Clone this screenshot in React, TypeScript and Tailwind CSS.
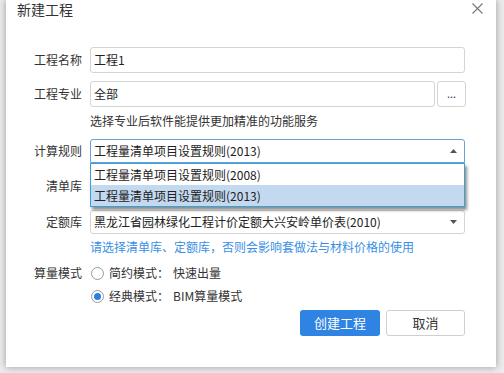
const FONT = "font-['Noto_Sans_CJK_SC','Microsoft_YaHei',sans-serif]";

function Label({ children }: { children: React.ReactNode }) {
  return <div className="w-[77px] shrink-0 pr-[1px] text-right text-[12px] text-[#333]">{children}</div>;
}

function Arrow({ up }: { up?: boolean }) {
  return (
    <svg width="7" height="4" viewBox="0 0 7 4" className="absolute right-[7px] top-1/2 -translate-y-1/2">
      <path d={up ? "M0 4 L3.5 0 L7 4 Z" : "M0 0 L3.5 4 L7 0 Z"} fill="#555" />
    </svg>
  );
}

function Radio({ checked, title, desc }: { checked?: boolean; title: string; desc: string }) {
  return (
    <div className="flex h-[20px] items-center text-[12px] text-[#333]">
      <span className="ml-[1px] flex h-[13px] w-[13px] items-center justify-center rounded-full border border-[#9a9a9a] bg-white">
        {checked && <span className="h-[7px] w-[7px] rounded-full bg-[#2b7fe0]" />}
      </span>
      <span className="ml-[5px]">{title}</span>
      <span className="ml-[4px]">{desc}</span>
    </div>
  );
}

export default function App() {
  return (
    <div className={`h-[373px] w-[504px] overflow-hidden bg-[#ebebeb] pl-[6px] ${FONT}`}>
      <div className="relative h-[367px] w-[490px] bg-white shadow-[0_0_7px_rgba(0,0,0,0.35)]">
        <div className="h-[18px] pl-[11px] text-[14px] leading-[18px] text-[#333]">新建工程</div>
        <svg width="11" height="11" viewBox="0 0 11 11" className="absolute right-[13px] top-[3px]">
          <path d="M0.5 0.5 L10.5 10.5 M10.5 0.5 L0.5 10.5" stroke="#777" strokeWidth="1.1" />
        </svg>

        <div className="mt-[29px] flex h-[26px] items-center gap-[7px]">
          <Label>工程名称</Label>
          <div className="flex h-[26px] w-[375px] items-center rounded-[3px] border border-[#d4d4d4] pl-[3px] text-[12px] text-[#222]">
            工程1
          </div>
        </div>

        <div className="mt-[8px] flex h-[26px] items-center gap-[7px]">
          <Label>工程专业</Label>
          <div className="flex h-[26px] w-[345px] items-center rounded-[3px] border border-[#d4d4d4] pl-[3px] text-[12px] text-[#222]">
            全部
          </div>
          <div className="-ml-[5px] flex h-[26px] w-[29px] items-center justify-center rounded-[3px] border border-[#d4d4d4] pb-[2px] text-[11px] text-[#335]">
            ...
          </div>
        </div>

        <div className="mt-[6px] pl-[84px] text-[12px] leading-[16px] text-[#333]">选择专业后软件能提供更加精准的功能服务</div>

        <div className="mt-[10px] flex h-[24px] items-center gap-[7px]">
          <Label>计算规则</Label>
          <div className="relative w-[375px]">
            <div className="relative flex h-[24px] items-center rounded-t-[3px] border border-[#6a9fdc] pl-[3px] text-[12px] text-[#222]">
              工程量清单项目设置规则(2013)
              <Arrow up />
            </div>
            <div className="absolute left-0 top-[24px] z-10 w-[375px] border border-[#3aa0d8] bg-white text-[12px] text-[#222] shadow-[2px_3px_3px_rgba(0,0,0,0.45)]">
              <div className="flex h-[21px] items-center pl-[3px]">工程量清单项目设置规则(2008)</div>
              <div className="flex h-[21px] items-center bg-[#c3d9f0] pl-[3px]">工程量清单项目设置规则(2013)</div>
            </div>
          </div>
        </div>

        <div className="mt-[11px] flex h-[24px] items-center gap-[7px]">
          <Label>清单库</Label>
          <div className="h-[24px] w-[375px] rounded-[3px] border border-[#d4d4d4]" />
        </div>

        <div className="mt-[12px] flex h-[24px] items-center gap-[7px]">
          <Label>定额库</Label>
          <div className="relative flex h-[24px] w-[375px] items-center rounded-[3px] border border-[#d4d4d4] pl-[3px] text-[12px] text-[#222]">
            黑龙江省园林绿化工程计价定额大兴安岭单价表(2010)
            <Arrow />
          </div>
        </div>

        <div className="mt-[5px] pl-[84px] text-[12px] leading-[16px] text-[#3a8fe4]">
          请选择清单库、定额库，否则会影响套做法与材料价格的使用
        </div>

        <div className="mt-[8px] flex items-center gap-[7px]">
          <Label>算量模式</Label>
          <Radio title="简约模式：" desc="快速出量" />
        </div>
        <div className="mt-[3px] pl-[84px]">
          <Radio checked title="经典模式：" desc="BIM算量模式" />
        </div>

        <div className="mt-[4px] flex justify-end gap-[6px] pr-[31px]">
          <button className="h-[26px] w-[80px] rounded-[3px] bg-[#2f83e2] text-[13px] text-white">创建工程</button>
          <button className="h-[26px] w-[79px] rounded-[3px] border border-[#cfcfcf] bg-white text-[13px] text-[#333]">取消</button>
        </div>
      </div>
    </div>
  );
}
